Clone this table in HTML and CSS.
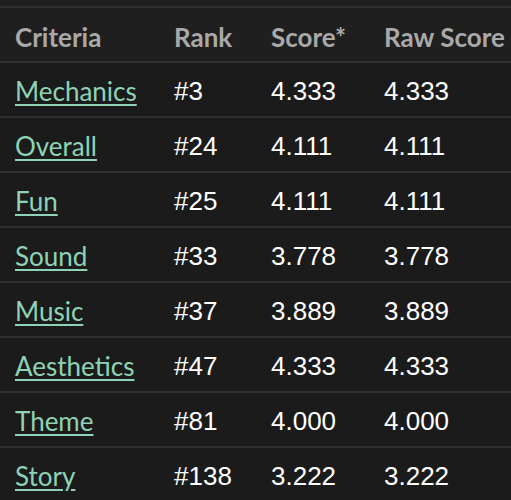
FILE: index.html
```html
<!DOCTYPE html>
<html>
<head>
<meta charset="utf-8">
<link rel="stylesheet" href="styles.css">
</head>
<body>
<div class="wrap">
<table class="ranks">
<thead>
<tr><th class="c1">Criteria</th><th class="c2">Rank</th><th class="c3">Score*</th><th class="c4">Raw Score</th></tr>
</thead>
<tbody>
<tr><td><a href="#">Mechanics</a></td><td>#3</td><td>4.333</td><td>4.333</td></tr>
<tr><td><a href="#">Overall</a></td><td>#24</td><td>4.111</td><td>4.111</td></tr>
<tr><td><a href="#">Fun</a></td><td>#25</td><td>4.111</td><td>4.111</td></tr>
<tr><td><a href="#">Sound</a></td><td>#33</td><td>3.778</td><td>3.778</td></tr>
<tr><td><a href="#">Music</a></td><td>#37</td><td>3.889</td><td>3.889</td></tr>
<tr><td><a href="#">Aesthetics</a></td><td>#47</td><td>4.333</td><td>4.333</td></tr>
<tr><td><a href="#">Theme</a></td><td>#81</td><td>4.000</td><td>4.000</td></tr>
<tr><td><a href="#">Story</a></td><td>#138</td><td>3.222</td><td>3.222</td></tr>
</tbody>
</table>
</div>
</body>
</html>
```
FILE: styles.css
```css
html, body {
  margin: 0;
  padding: 0;
  background: #1b1b1b;
  overflow: hidden;
}
.wrap {
  padding-top: 6px;
  background: #1f1f1f;
  width: 511px;
  overflow: hidden;
}
.ranks {
  border-collapse: collapse;
  table-layout: fixed;
  width: 560px;
  font-family: Lato, "Liberation Sans", sans-serif;
  font-size: 26px;
  background: #1b1b1b;
}
.ranks th, .ranks td {
  text-align: left;
  padding: 4px 0 0 15px;
  height: 49px;
  border-top: 2px solid #303030;
  white-space: nowrap;
}
.ranks th {
  color: #a9a9a9;
  font-weight: bold;
  background: #1f1f1f;
}
.ranks td {
  color: #ffffff;
  font-family: "Liberation Sans", Arial, sans-serif;
}
.c1 { width: 144px; }
.c2 { width: 82px; }
.c3 { width: 98px; }
.ranks td a {
  font-family: Lato, sans-serif;
  color: #8ed3b5;
  text-decoration: underline;
  text-underline-offset: 3px;
}
```
